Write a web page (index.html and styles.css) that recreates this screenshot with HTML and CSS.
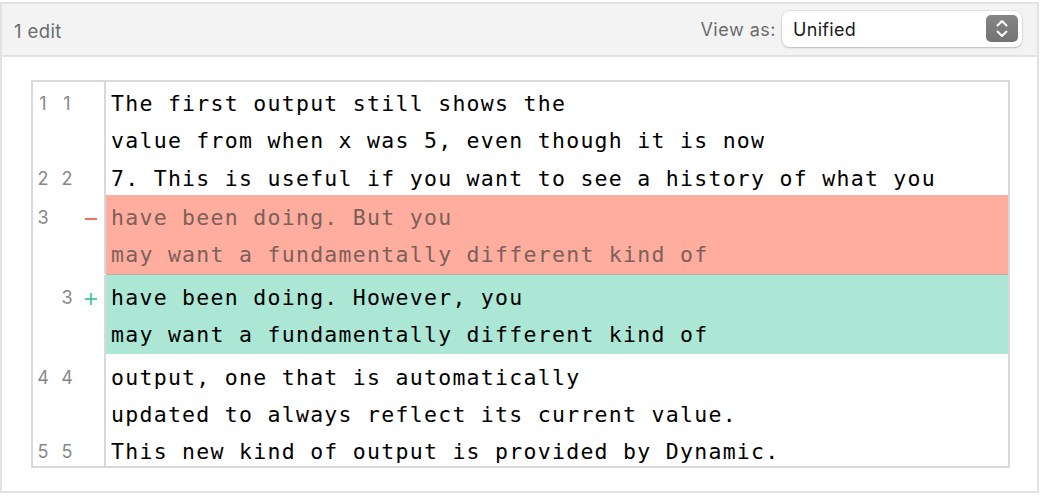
FILE: index.html
```html
<!DOCTYPE html>
<html>
<head>
<meta charset="utf-8">
<link rel="stylesheet" href="styles.css">
</head>
<body>
<div class="panel">
  <div class="toolbar">
    <span class="count">1 edit</span>
    <div class="view">
      <span class="view-label">View as:</span>
      <div class="select">
        <span class="select-value">Unified</span>
        <span class="stepper">
          <svg width="32" height="27" viewBox="0 0 32 27"><polyline points="11.5,10.5 16,6 20.5,10.5" fill="none" stroke="#fff" stroke-width="2" stroke-linecap="round" stroke-linejoin="round"/><polyline points="11.5,16.5 16,21 20.5,16.5" fill="none" stroke="#fff" stroke-width="2" stroke-linecap="round" stroke-linejoin="round"/></svg>
        </span>
      </div>
    </div>
  </div>
  <div class="body">
    <div class="diff">
      <div class="row">
        <div class="gutter"><span class="num">1</span><span class="num">1</span><span class="sign"></span></div>
        <div class="code"><div class="line">The first output still shows the</div><div class="line">value from when x was 5, even though it is now</div></div>
      </div>
      <div class="row">
        <div class="gutter"><span class="num">2</span><span class="num">2</span><span class="sign"></span></div>
        <div class="code"><div class="line">7. This is useful if you want to see a history of what you</div></div>
      </div>
      <div class="row del">
        <div class="gutter"><span class="num">3</span><span class="num"></span><span class="sign"><svg width="12" height="12" viewBox="0 0 12 12"><line x1="0" y1="6" x2="12" y2="6" stroke="#f04e2b" stroke-width="1.6"/></svg></span></div>
        <div class="code"><div class="line">have been doing. But you</div><div class="line">may want a fundamentally different kind of</div></div>
      </div>
      <div class="row ins">
        <div class="gutter"><span class="num"></span><span class="num">3</span><span class="sign"><svg width="12" height="12" viewBox="0 0 12 12"><line x1="0" y1="6" x2="12" y2="6" stroke="#2ec28e" stroke-width="1.6"/><line x1="6" y1="0" x2="6" y2="12" stroke="#2ec28e" stroke-width="1.6"/></svg></span></div>
        <div class="code"><div class="line">have been doing. However, you</div><div class="line">may want a fundamentally different kind of</div></div>
      </div>
      <div class="row after">
        <div class="gutter"><span class="num">4</span><span class="num">4</span><span class="sign"></span></div>
        <div class="code"><div class="line">output, one that is automatically</div><div class="line">updated to always reflect its current value.</div></div>
      </div>
      <div class="row last">
        <div class="gutter"><span class="num">5</span><span class="num">5</span><span class="sign"></span></div>
        <div class="code"><div class="line">This new kind of output is provided by Dynamic.</div></div>
      </div>
    </div>
  </div>
</div>
</body>
</html>
```

FILE: styles.css
```css
html, body {
  margin: 0;
  padding: 0;
  background: #ffffff;
}

body {
  font-family: "Inter", "Liberation Sans", sans-serif;
}

.panel {
  box-sizing: border-box;
  width: 1039px;
  margin-top: 2px;
  border: 2px solid #e2e2e2;
  background: #ffffff;
}

.toolbar {
  box-sizing: border-box;
  background: #f3f3f3;
  border-bottom: 2px solid #e2e2e2;
  height: 53px;
  display: flex;
  align-items: center;
  justify-content: space-between;
  padding: 0 15px 0 12px;
}

.count {
  font-size: 18.5px;
  color: #6b6b6b;
  letter-spacing: 0.4px;
  margin-top: 3px;
}

.view {
  display: flex;
  align-items: center;
  gap: 6px;
}

.view-label {
  font-size: 18px;
  color: #6b6b6b;
  letter-spacing: 0.5px;
}

.select {
  box-sizing: border-box;
  width: 240px;
  height: 36px;
  margin-top: -2px;
  border-radius: 7px;
  background: #ffffff;
  box-shadow: 0 0 0 0.5px rgba(0, 0, 0, 0.12), 0 1px 2px rgba(0, 0, 0, 0.18);
  display: flex;
  align-items: center;
  justify-content: space-between;
  padding: 0 4px 0 11px;
}

.select-value {
  font-size: 18px;
  color: #1a1a1a;
  letter-spacing: 0.3px;
  margin-top: 2px;
}

.stepper {
  width: 32px;
  height: 27px;
  border-radius: 5px;
  background: linear-gradient(#858585, #747474);
  display: block;
  margin-top: -1px;
}

.stepper svg {
  display: block;
}

.body {
  padding: 23px 27px 23px 29px;
}

.diff {
  border: 2px solid #d9d9d9;
}

.row {
  display: grid;
  grid-template-columns: 73px 1fr;
}

.gutter {
  border-right: 2px solid #d9d9d9;
  display: grid;
  grid-template-columns: 12px 12px 12px;
  column-gap: 12px;
  align-content: start;
  padding-left: 4px;
  font-family: "Inter", "Liberation Sans", sans-serif;
  font-size: 18px;
  color: #888888;
  line-height: 37.5px;
}

.num {
  text-align: center;
  display: block;
  height: 37.5px;
  box-sizing: border-box;
  padding-top: 3px;
}

.sign {
  display: block;
}

.sign svg {
  display: block;
  margin-top: 16.5px;
}

.code {
  padding-left: 5px;
  font-family: "DejaVu Sans Mono", "Liberation Mono", monospace;
  font-size: 21.5px;
  letter-spacing: 1.28px;
  line-height: 37.5px;
  color: #000000;
  white-space: pre;
}

.line {
  box-sizing: border-box;
  height: 37.5px;
  padding-top: 2.5px;
}

.row.del > * {
  padding-top: 1.5px;
  padding-bottom: 3px;
}

.row.del .code {
  background: #ffad9e;
  color: #7c605a;
}

.row.ins {
  border-top: 1px solid transparent;
}

.row.ins > * {
  padding-top: 1px;
  padding-bottom: 3px;
}

.row.ins .code {
  background: #ace7d6;
  box-shadow: 0 -1px 0 #b9ae9f;
}

.row.after > * {
  padding-top: 2px;
}

.row.last .code,
.row.last .gutter,
.row.last .line,
.row.last .num {
  line-height: 35px;
  height: 35px;
}
```
